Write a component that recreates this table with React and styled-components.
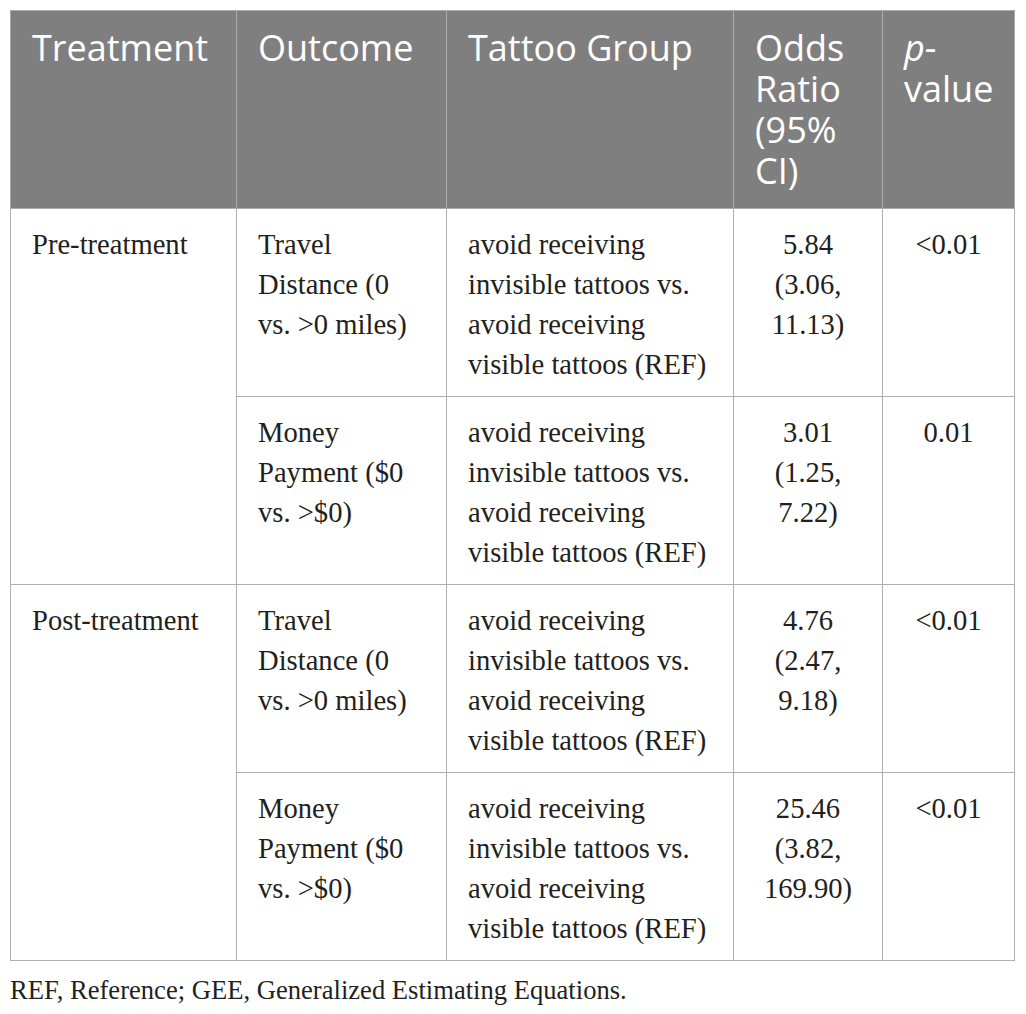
import React from 'react';
import styled, { createGlobalStyle } from 'styled-components';

const GlobalStyle = createGlobalStyle`
  html, body {
    margin: 0;
    padding: 0;
    background: #fff;
  }
`;

const Page = styled.div`
  padding: 10px 10px 0 10px;
  width: 1004px;
`;

const Table = styled.table`
  width: 1004px;
  table-layout: fixed;
  border-collapse: collapse;
  border: 1px solid #b0b0b0;
`;

const HeadCell = styled.th`
  background: #7f7f7f;
  color: #fff;
  font-family: 'Open Sans', sans-serif;
  font-weight: 400;
  font-size: 36px;
  line-height: 41px;
  text-align: left;
  vertical-align: top;
  padding: 16px 8px 17px 21px;
  border: 1px solid #ababab;
  white-space: nowrap;

  em {
    font-style: italic;
  }
`;

const Cell = styled.td`
  font-family: 'Liberation Serif', 'Times New Roman', serif;
  font-size: 28.6px;
  line-height: 40px;
  color: #231f20;
  text-align: ${(p) => (p.$center ? 'center' : 'left')};
  vertical-align: top;
  padding: 16px 8px 11px ${(p) => (p.$center ? '8px' : '21px')};
  border: 1px solid #b0b0b0;
  white-space: nowrap;
`;

const Caption = styled.p`
  margin: 12px 0 0 0;
  font-family: 'Liberation Serif', 'Times New Roman', serif;
  font-size: 26.6px;
  line-height: 34px;
  color: #231f20;
`;

const Lines = ({ lines }) =>
  lines.map((line, i) => (
    <React.Fragment key={i}>
      {i > 0 && <br />}
      {line}
    </React.Fragment>
  ));

const group = [
  'avoid receiving',
  'invisible tattoos vs.',
  'avoid receiving',
  'visible tattoos (REF)',
];
const travel = ['Travel', 'Distance (0', 'vs. >0 miles)'];
const money = ['Money', 'Payment ($0', 'vs. >$0)'];

const rows = [
  { treatment: 'Pre-treatment', outcome: travel, odds: ['5.84', '(3.06,', '11.13)'], p: '<0.01' },
  { outcome: money, odds: ['3.01', '(1.25,', '7.22)'], p: '0.01' },
  { treatment: 'Post-treatment', outcome: travel, odds: ['4.76', '(2.47,', '9.18)'], p: '<0.01' },
  { outcome: money, odds: ['25.46', '(3.82,', '169.90)'], p: '<0.01' },
];

export default function App() {
  return (
    <Page>
      <GlobalStyle />
      <Table>
        <colgroup>
          <col style={{ width: 226 }} />
          <col style={{ width: 210 }} />
          <col style={{ width: 287 }} />
          <col style={{ width: 149 }} />
          <col style={{ width: 132 }} />
        </colgroup>
        <thead>
          <tr>
            <HeadCell>Treatment</HeadCell>
            <HeadCell>Outcome</HeadCell>
            <HeadCell>Tattoo Group</HeadCell>
            <HeadCell>
              <Lines lines={['Odds', 'Ratio', '(95%', 'CI)']} />
            </HeadCell>
            <HeadCell>
              <em>p</em>-<br />value
            </HeadCell>
          </tr>
        </thead>
        <tbody>
          {rows.map((row, i) => (
            <tr key={i}>
              {row.treatment && <Cell rowSpan={2}>{row.treatment}</Cell>}
              <Cell>
                <Lines lines={row.outcome} />
              </Cell>
              <Cell>
                <Lines lines={group} />
              </Cell>
              <Cell $center>
                <Lines lines={row.odds} />
              </Cell>
              <Cell $center>{row.p}</Cell>
            </tr>
          ))}
        </tbody>
      </Table>
      <Caption>REF, Reference; GEE, Generalized Estimating Equations.</Caption>
    </Page>
  );
}
